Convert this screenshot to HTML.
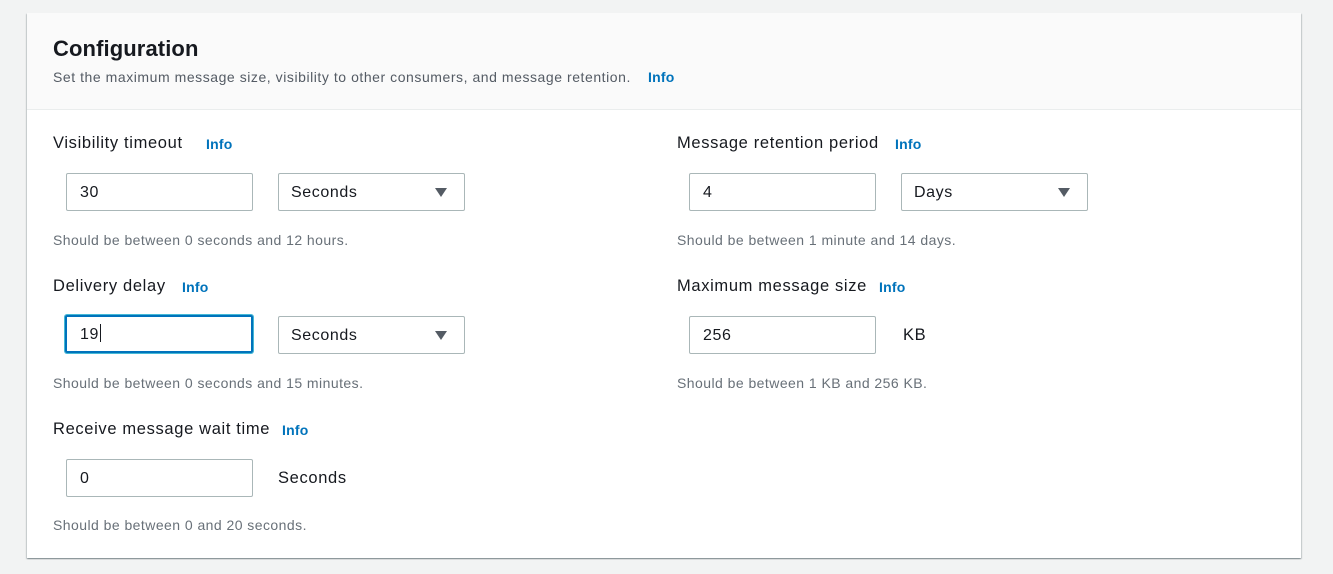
<!DOCTYPE html>
<html><head><style>
body{margin:0;background:#f2f3f3;width:1333px;height:574px;overflow:hidden;font-family:"Liberation Sans",Arial,sans-serif;color:#16191f;position:relative}
.card{position:absolute;left:27px;top:13px;width:1274px;height:545px;background:#fff;box-shadow:0 1px 1px 0 rgba(0,28,36,.3),1px 1px 1px 0 rgba(0,28,36,.15),-1px 1px 1px 0 rgba(0,28,36,.15)}
.hd{position:absolute;left:0;top:0;right:0;height:96px;background:#fafafa;border-bottom:1px solid #eaeded}
.a{position:absolute;white-space:nowrap}
h1{position:absolute;left:26px;top:23px;margin:0;font-size:22px;font-weight:bold;letter-spacing:0.1px}
.sub{font-size:14px;color:#545b64;letter-spacing:0.55px}
.info{color:#0073bb;font-weight:bold;font-size:14px;letter-spacing:0.2px}
.lbl{font-size:16.5px;letter-spacing:0.65px}
.help{font-size:14px;color:#687078;letter-spacing:0.45px}
.in{position:absolute;width:185px;height:36px;border:1px solid #aab7b8;border-radius:2px;box-sizing:content-box;font-size:16px;line-height:38px;letter-spacing:0.6px}
.in span{margin-left:13px}
.sel span{margin-left:12px}
.tri{position:absolute;right:17px;top:14px;width:0;height:0;border-left:6px solid transparent;border-right:6px solid transparent;border-top:9px solid #545b64}
.focus{border:2px solid #0073bb;box-shadow:0 0 0 1px #44b9d6;width:184px;height:34px;line-height:36px}
</style></head><body>
<div class="card">
<div class="hd"></div>
<h1>Configuration</h1>
<div class="a sub" style="left:26px;top:56px">Set the maximum message size, visibility to other consumers, and message retention.</div>
<div class="a info" style="left:621px;top:56px">Info</div>

<div class="a lbl" style="left:26px;top:121px">Visibility timeout</div>
<div class="a info" style="left:179px;top:123px">Info</div>
<div class="in" style="left:39px;top:160px"><span>30</span></div>
<div class="in sel" style="left:251px;top:160px"><span>Seconds</span><div class="tri"></div></div>
<div class="a help" style="left:26px;top:219px">Should be between 0 seconds and 12 hours.</div>

<div class="a lbl" style="left:26px;top:264px">Delivery delay</div>
<div class="a info" style="left:155px;top:266px">Info</div>
<div class="in focus" style="left:38px;top:302px"><span>19<span style="border-left:1px solid #16191f;margin-left:1px;height:18px;display:inline-block;vertical-align:-3px"></span></span></div>
<div class="in sel" style="left:251px;top:303px"><span>Seconds</span><div class="tri"></div></div>
<div class="a help" style="left:26px;top:362px">Should be between 0 seconds and 15 minutes.</div>

<div class="a lbl" style="left:26px;top:407px">Receive message wait time</div>
<div class="a info" style="left:255px;top:409px">Info</div>
<div class="in" style="left:39px;top:446px"><span>0</span></div>
<div class="a lbl" style="left:251px;top:456px">Seconds</div>
<div class="a help" style="left:26px;top:504px">Should be between 0 and 20 seconds.</div>

<div class="a lbl" style="left:650px;top:121px">Message retention period</div>
<div class="a info" style="left:868px;top:123px">Info</div>
<div class="in" style="left:662px;top:160px"><span>4</span></div>
<div class="in sel" style="left:874px;top:160px"><span>Days</span><div class="tri"></div></div>
<div class="a help" style="left:650px;top:219px">Should be between 1 minute and 14 days.</div>

<div class="a lbl" style="left:650px;top:264px">Maximum message size</div>
<div class="a info" style="left:852px;top:266px">Info</div>
<div class="in" style="left:662px;top:303px"><span>256</span></div>
<div class="a lbl" style="left:876px;top:313px">KB</div>
<div class="a help" style="left:650px;top:362px">Should be between 1 KB and 256 KB.</div>
</div>
</body></html>
